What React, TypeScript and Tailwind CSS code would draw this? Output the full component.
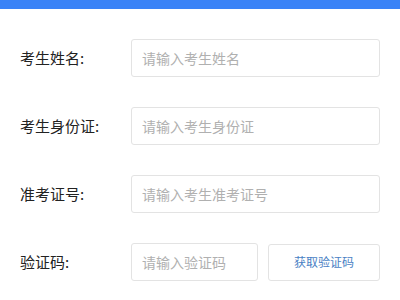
import { useState } from 'react';

const fields = [
  { key: 'name', label: '考生姓名:', placeholder: '请输入考生姓名' },
  { key: 'idCard', label: '考生身份证:', placeholder: '请输入考生身份证' },
  { key: 'ticket', label: '准考证号:', placeholder: '请输入考生准考证号' },
];

export default function App() {
  const [values, setValues] = useState<Record<string, string>>({});

  const setValue = (key: string, value: string) =>
    setValues(prev => ({ ...prev, [key]: value }));

  return (
    <div
      className="w-[400px] h-[300px] bg-white overflow-hidden"
      style={{ fontFamily: '"Noto Sans CJK SC", "Noto Sans", sans-serif' }}
    >
      <div className="h-[9px] bg-[#3a83f7]" />

      <div className="flex flex-col gap-[30px] pt-[30px] pl-5 pr-5">
        {fields.map(f => (
          <div key={f.key} className="flex items-center">
            <label className="w-[111px] shrink-0 text-[15px] text-[#222]">{f.label}</label>
            <input
              type="text"
              value={values[f.key] ?? ''}
              onChange={(e) => setValue(f.key, e.target.value)}
              placeholder={f.placeholder}
              className="flex-1 h-[38px] px-[10px] border border-[#e3e3e3] rounded-[3px] text-[14px] text-[#333] placeholder:text-[#b0b0b0] focus:outline-none"
            />
          </div>
        ))}

        <div className="flex items-center">
          <label className="w-[111px] shrink-0 text-[15px] text-[#222]">验证码:</label>
          <input
            type="text"
            value={values.code ?? ''}
            onChange={(e) => setValue('code', e.target.value)}
            placeholder="请输入验证码"
            className="w-[127px] h-[38px] px-[10px] border border-[#e3e3e3] rounded-[3px] text-[14px] text-[#333] placeholder:text-[#b0b0b0] focus:outline-none"
          />
          <button className="ml-[10px] flex-1 h-[37px] border border-[#e3e3e3] rounded-[3px] bg-white text-[12px] text-[#4a7fc4]">
            获取验证码
          </button>
        </div>
      </div>
    </div>
  );
}
